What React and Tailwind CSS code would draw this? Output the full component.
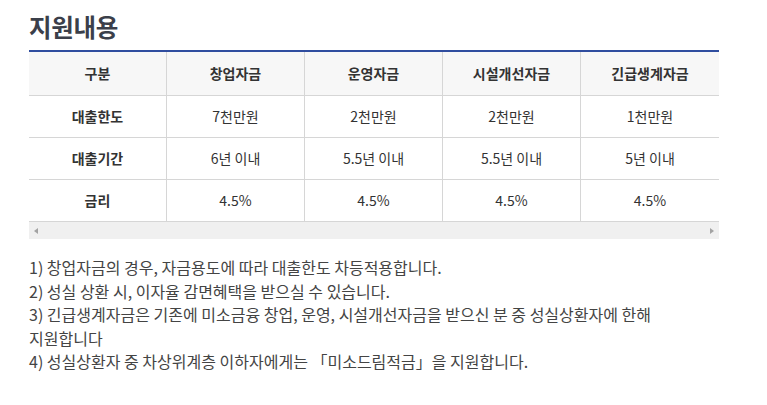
import React from "react";

const cols = ["구분", "창업자금", "운영자금", "시설개선자금", "긴급생계자금"];
const rows = [
  ["대출한도", "7천만원", "2천만원", "2천만원", "1천만원"],
  ["대출기간", "6년 이내", "5.5년 이내", "5.5년 이내", "5년 이내"],
  ["금리", "4.5%", "4.5%", "4.5%", "4.5%"],
];

const grid = "grid grid-cols-[137px_138px_138px_138px_139px]";

export default function App() {
  return (
    <div
      className="w-[767px] h-[405px] bg-white pl-[29px] pt-[9px]"
      style={{ fontFamily: '"Noto Sans CJK KR", "Noto Sans", sans-serif' }}
    >
      <h2 className="text-[24.5px] leading-[35px] font-bold text-[#3b3f4a] tracking-[-0.3px]">지원내용</h2>
      <div className="mt-[6px] w-[690px] border-t-2 border-[#2f4d9f]">
        <div className={`${grid} h-[44px] bg-[#f7f7f7] border-b border-[#d6d6d6]`}>
          {cols.map((c, i) => (
            <div
              key={c}
              className={`flex items-center justify-center text-[14px] font-bold text-[#333] ${i > 0 ? "border-l border-[#d6d6d6]" : ""}`}
            >
              {c}
            </div>
          ))}
        </div>
        {rows.map((r) => (
          <div key={r[0]} className={`${grid} h-[42px] border-b border-[#d6d6d6]`}>
            {r.map((c, i) => (
              <div
                key={i}
                className={`flex items-center justify-center text-[14px] text-[#333] ${i === 0 ? "font-bold" : ""} ${i > 0 ? "border-l border-[#d6d6d6]" : ""}`}
              >
                {c}
              </div>
            ))}
          </div>
        ))}
        <div className="h-[17px] bg-[#f0f0f0] flex items-center justify-between px-[5px]">
          <span className="w-0 h-0 border-y-[3.5px] border-y-transparent border-r-[4px] border-r-[#a3a3a3]" />
          <span className="w-0 h-0 border-y-[3.5px] border-y-transparent border-l-[4px] border-l-[#a3a3a3]" />
        </div>
      </div>
      <div className="mt-[17px] text-[16px] leading-[23.5px] text-[#444]">
        <p>1) 창업자금의 경우, 자금용도에 따라 대출한도 차등적용합니다.</p>
        <p>2) 성실 상환 시, 이자율 감면혜택을 받으실 수 있습니다.</p>
        <p>3) 긴급생계자금은 기존에 미소금융 창업, 운영, 시설개선자금을 받으신 분 중 성실상환자에 한해</p>
        <p>지원합니다</p>
        <p>4) 성실상환자 중 차상위계층 이하자에게는 「미소드림적금」을 지원합니다.</p>
      </div>
    </div>
  );
}
